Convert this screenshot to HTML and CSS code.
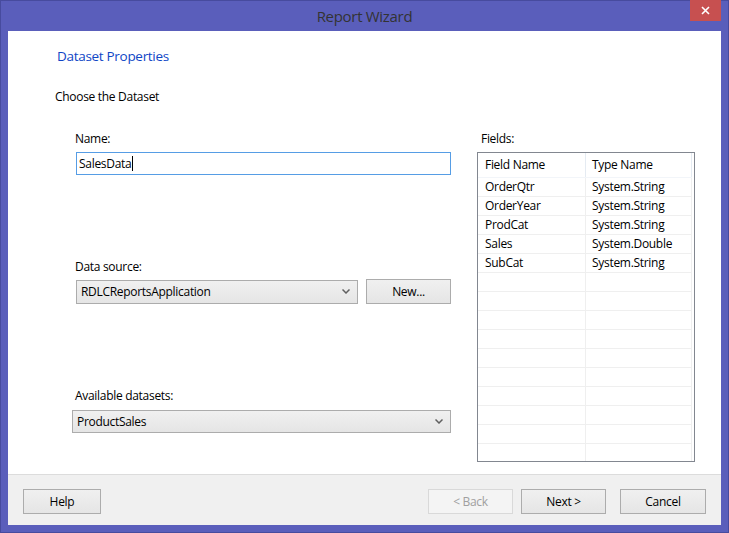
FILE: index.html
```html
<!DOCTYPE html>
<html>
<head>
<meta charset="utf-8">
<title>Report Wizard</title>
<link rel="stylesheet" href="styles.css">
</head>
<body>
<div class="window">
  <div class="titlebar">
    <div class="title">Report Wizard</div>
    <button class="close" aria-label="Close">
      <svg width="9" height="9" viewBox="0 0 9 9"><path d="M1 1 L8 8 M8 1 L1 8" stroke="#fff" stroke-width="1.6"/></svg>
    </button>
  </div>
  <div class="client">
    <div class="content">
      <div class="heading">Dataset Properties</div>
      <div class="subheading">Choose the Dataset</div>
      <div class="main">
        <div class="left">
          <div class="label">Name:</div>
          <div class="textbox"><span class="value">SalesData</span><span class="caret"></span></div>
          <div class="label label-ds">Data source:</div>
          <div class="ds-row">
            <div class="select select-ds"><span>RDLCReportsApplication</span><svg class="chev" width="8" height="5" viewBox="0 0 8 5"><path d="M0.5 0.5 L4 4 L7.5 0.5" fill="none" stroke="#606060" stroke-width="1.5"/></svg></div>
            <button class="btn btn-new">New...</button>
          </div>
          <div class="label label-av">Available datasets:</div>
          <div class="select select-av"><span>ProductSales</span><svg class="chev" width="8" height="5" viewBox="0 0 8 5"><path d="M0.5 0.5 L4 4 L7.5 0.5" fill="none" stroke="#606060" stroke-width="1.5"/></svg></div>
        </div>
        <div class="right">
          <div class="label label-fields">Fields:</div>
          <div class="grid">
            <div class="row head"><div class="c1">Field Name</div><div class="c2">Type Name</div></div>
            <div class="row"><div class="c1">OrderQtr</div><div class="c2">System.String</div></div>
            <div class="row"><div class="c1">OrderYear</div><div class="c2">System.String</div></div>
            <div class="row"><div class="c1">ProdCat</div><div class="c2">System.String</div></div>
            <div class="row"><div class="c1">Sales</div><div class="c2">System.Double</div></div>
            <div class="row"><div class="c1">SubCat</div><div class="c2">System.String</div></div>
            <div class="row"><div class="c1"></div><div class="c2"></div></div>
            <div class="row"><div class="c1"></div><div class="c2"></div></div>
            <div class="row"><div class="c1"></div><div class="c2"></div></div>
            <div class="row"><div class="c1"></div><div class="c2"></div></div>
            <div class="row"><div class="c1"></div><div class="c2"></div></div>
            <div class="row"><div class="c1"></div><div class="c2"></div></div>
            <div class="row"><div class="c1"></div><div class="c2"></div></div>
            <div class="row"><div class="c1"></div><div class="c2"></div></div>
            <div class="row"><div class="c1"></div><div class="c2"></div></div>
            <div class="row"><div class="c1"></div><div class="c2"></div></div>
          </div>
        </div>
      </div>
    </div>
    <div class="footer">
      <button class="btn btn-help">Help</button>
      <div class="spacer"></div>
      <button class="btn btn-back" disabled>&lt; Back</button>
      <button class="btn btn-next">Next &gt;</button>
      <button class="btn btn-cancel">Cancel</button>
    </div>
  </div>
</div>
</body>
</html>
```
FILE: styles.css
```css
* { box-sizing: border-box; }
html, body { margin: 0; padding: 0; }
body {
  font-family: "Open Sans", "Noto Sans", "Liberation Sans", sans-serif;
  font-size: 12px;
  letter-spacing: -0.3px;
  color: #000;
  background: #fff;
}
.window {
  width: 729px;
  height: 533px;
  background: #5a5ebb;
  border: 1px solid #474b9e;
  padding: 0 7px 7px 7px;
  display: flex;
  flex-direction: column;
}
.titlebar {
  height: 30px;
  display: flex;
  justify-content: center;
  position: relative;
}
.title {
  font-size: 15px;
  line-height: 30px;
  color: #333;
  letter-spacing: -0.3px;
}
.close {
  position: absolute;
  right: 0;
  top: -1px;
  width: 31px;
  height: 21px;
  border: 0;
  padding: 0;
  background: #c75050;
  display: flex;
  align-items: center;
  justify-content: center;
}
.client {
  flex: 1;
  background: #fff;
  display: flex;
  flex-direction: column;
}
.content {
  flex: 1;
  padding-top: 15px;
}
.heading {
  margin-left: 49px;
  font-size: 13.5px;
  line-height: 20px;
  color: #0f46c6;
}
.subheading {
  margin-left: 47px;
  margin-top: 23px;
  line-height: 16px;
}
.main {
  display: flex;
  margin-top: 26px;
  margin-left: 64px;
}
.left {
  width: 379px;
  display: flex;
  flex-direction: column;
}
.right {
  margin-left: 26px;
  width: 218px;
  display: flex;
  flex-direction: column;
}
.label {
  line-height: 16px;
  margin-left: 3px;
}
.label-fields { margin-left: 4px; }
.textbox {
  margin-top: 5px;
  margin-left: 4px;
  width: 375px;
  height: 23px;
  border: 1px solid #569de5;
  padding-left: 2px;
  display: flex;
  align-items: center;
}
.caret {
  display: inline-block;
  width: 1px;
  height: 15px;
  background: #000;
  margin-left: 1px;
}
.label-ds { margin-top: 84px; }
.ds-row {
  margin-top: 4px;
  margin-left: 4px;
  display: flex;
  align-items: center;
  gap: 8px;
}
.select {
  height: 24px;
  border: 1px solid #acacac;
  background: linear-gradient(#f0f0f0, #e5e5e5);
  display: flex;
  align-items: center;
  justify-content: space-between;
  padding: 0 7px 0 4px;
}
.select-ds { width: 282px; }
.label-av { margin-top: 84px; }
.select-av {
  margin-top: 6px;
  width: 379px;
  height: 23px;
}
.chev { display: block; }
.btn {
  font-family: inherit;
  font-size: 12px;
  letter-spacing: -0.3px;
  color: #000;
  height: 25px;
  border: 1px solid #acacac;
  background: linear-gradient(#f0f0f0, #e5e5e5);
  padding: 0;
}
.btn-new { width: 85px; height: 25px; }
.grid {
  margin-top: 5px;
  width: 218px;
  height: 310px;
  border: 1px solid #828790;
  overflow: hidden;
  padding-right: 2px;
}
.row {
  display: flex;
  height: 19px;
  border-bottom: 1px solid #efefef;
  line-height: 18px;
}
.row.head {
  height: 25px;
  line-height: 24px;
  border-bottom: 1px solid #f2f5f9;
}
.c1 {
  width: 108px;
  padding-left: 7px;
  border-right: 1px solid #efefef;
}
.c2 {
  flex: 1;
  padding-left: 6px;
  border-right: 1px solid #efefef;
}
.head .c1, .head .c2 { border-right-color: #e5ebf2; }
.footer {
  height: 51px;
  background: #f0f0f0;
  border-top: 1px solid #dcdcdc;
  display: flex;
  align-items: flex-start;
  padding: 14px 15px 0 15px;
}
.spacer { flex: 1; }
.btn-help { width: 78px; }
.btn-back {
  width: 85px;
  color: #a0a0a0;
  border-color: #d9d9d9;
  background: #f4f4f4;
}
.btn-next { width: 85px; margin-left: 8px; }
.btn-cancel { width: 86px; margin-left: 14px; }
```
